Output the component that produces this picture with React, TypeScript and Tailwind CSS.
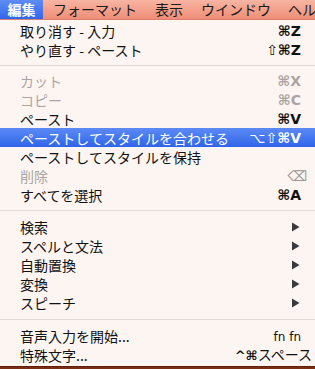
import React from "react";

const JP = { fontFamily: '"Noto Sans CJK JP", "Noto Sans", sans-serif' };
const SYM = { fontFamily: '"DejaVu Sans", "Noto Sans CJK JP", sans-serif' };

function Arrow() {
  return (
    <svg width="9" height="10" viewBox="0 0 9 10" className="mr-[1px] shrink-0">
      <path d="M1 0.5 L8.5 5 L1 9.5 Z" fill="#3a3a3a" />
    </svg>
  );
}

type Item = {
  label: string;
  sc?: React.ReactNode;
  disabled?: boolean;
  active?: boolean;
  sub?: boolean;
  pr?: string;
};

function Row({ label, sc, disabled, active, sub, pr }: Item) {
  const color = active ? "text-white" : disabled ? "text-[#aaa5a4]" : "text-[#111]";
  return (
    <div
      className={`flex h-[19px] items-center justify-between pl-[20px] ${pr ?? "pr-[14px]"} ${
        active ? "bg-gradient-to-b from-[#5c8af5] to-[#2f64ea]" : ""
      } ${color}`}
    >
      <span className="text-[14px] leading-none whitespace-nowrap" style={JP}>
        {label}
      </span>
      {sub ? (
        <Arrow />
      ) : (
        sc && (
          <span className="text-[14px] leading-none font-semibold whitespace-nowrap" style={SYM}>
            {sc}
          </span>
        )
      )}
    </div>
  );
}

function Sep({ h = "h-[12px]" }: { h?: string }) {
  return (
    <div className={`flex ${h} items-center`}>
      <div className="h-px w-full bg-[#e3d9d6]" />
    </div>
  );
}

const N = ({ c }: { c: string }) => <span className="font-normal">{c}</span>;

export default function App() {
  return (
    <div className="w-[315px] h-[369px] overflow-hidden bg-[#7a2e14]" style={JP}>
      <div className="flex h-[20px] items-center overflow-hidden bg-gradient-to-b from-[#f8b5a3] to-[#ee8d77] border-b border-[#d9806c] text-[14px] text-[#1a1a1a] whitespace-nowrap">
        <div className="flex h-full w-[43px] shrink-0 items-center justify-center bg-gradient-to-b from-[#5f8cf5] to-[#3166ea] text-white font-semibold">
          編集
        </div>
        <div className="shrink-0 pl-[10px] pr-[8px]">フォーマット</div>
        <div className="shrink-0 pl-[10px] pr-[8px]">表示</div>
        <div className="shrink-0 pl-[10px] pr-[8px]">ウインドウ</div>
        <div className="shrink-0 pl-[9px]">ヘルプ</div>
      </div>
      <div className="h-[346px] bg-[#fdf5f2] pt-[1px]">
        <Row label="取り消す - 入力" sc="⌘Z" />
        <Row label="やり直す - ペースト" sc={<><N c="⇧" />⌘Z</>} />
        <Sep />
        <Row label="カット" sc="⌘X" disabled />
        <Row label="コピー" sc="⌘C" disabled />
        <Row label="ペースト" sc="⌘V" />
        <Row label="ペーストしてスタイルを合わせる" sc={<><N c="⌥" /><N c="⇧" />⌘V</>} active />
        <Row label="ペーストしてスタイルを保持" />
        <Row
          label="削除"
          disabled
          pr="pr-[8px]"
          sc={<span className="font-normal text-[14px] text-[#9b9695]">⌫</span>}
        />
        <Row label="すべてを選択" sc="⌘A" />
        <Sep h="h-[13px]" />
        <Row label="検索" sub />
        <Row label="スペルと文法" sub />
        <Row label="自動置換" sub />
        <Row label="変換" sub />
        <Row label="スピーチ" sub />
        <Sep h="h-[14px]" />
        <Row label="音声入力を開始..." sc={<span className="text-[12px] font-normal">fn fn</span>} />
        <Row
          label="特殊文字..."
          pr="pr-[3px]"
          sc={
            <span className="text-[13px]">
              ^⌘<span style={JP} className="font-normal text-[14px]">スペース</span>
            </span>
          }
        />
      </div>
      <div className="h-px bg-[#5e1e0a]" />
    </div>
  );
}
